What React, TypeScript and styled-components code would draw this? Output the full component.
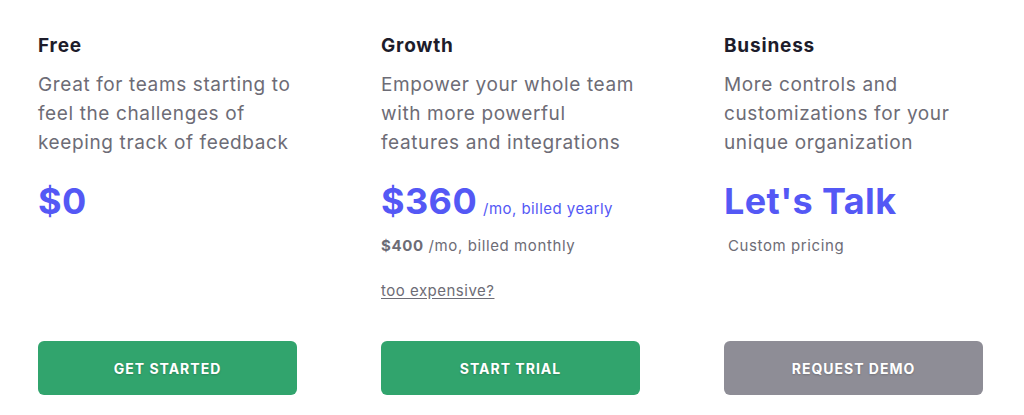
import React from "react";
import styled, { createGlobalStyle } from "styled-components";

const Global = createGlobalStyle`
  html, body { margin: 0; padding: 0; background: #fff; }
  body { font-family: Inter, "Noto Sans", sans-serif; -webkit-font-smoothing: antialiased; }
`;

const Page = styled.div`
  display: grid;
  grid-template-columns: repeat(3, 343px);
  padding: 33px 0 0 38px;
`;

const Plan = styled.div`
  display: flex;
  flex-direction: column;
  height: 362px;
`;

const Title = styled.h3`
  margin: 0;
  font-size: 19px;
  line-height: 26px;
  font-weight: 700;
  letter-spacing: 0.8px;
  color: #1d1c2b;
`;

const Desc = styled.p`
  margin: 11px 0 0;
  width: 258px;
  font-size: 19px;
  line-height: 29px;
  letter-spacing: 0.62px;
  color: #6d6c76;
`;

const PriceRow = styled.div`
  display: flex;
  align-items: baseline;
  margin-top: 20px;
  gap: 6px;
`;

const Price = styled.span`
  font-size: 36px;
  line-height: 48px;
  font-weight: 700;
  letter-spacing: 0.4px;
  color: #5458f5;
`;

const Period = styled.span`
  font-size: 15px;
  letter-spacing: 0.45px;
  color: #5458f5;
`;

const Sub = styled.div<{ $indent?: boolean }>`
  margin-top: 9px;
  font-size: 15px;
  line-height: 24px;
  letter-spacing: 0.6px;
  color: #6d6c76;
  padding-left: ${(p) => (p.$indent ? "4px" : "0")};
  b { color: #6d6c76; font-weight: 700; margin-right: 5px; }
`;

const Link = styled.a`
  margin-top: 21px;
  font-size: 15px;
  line-height: 24px;
  letter-spacing: 0.5px;
  color: #6d6c76;
  text-decoration: underline;
  text-underline-offset: 2px;
  align-self: flex-start;
`;

const Button = styled.button<{ $variant: "green" | "gray" }>`
  margin-top: auto;
  width: 259px;
  height: 54px;
  border: none;
  border-radius: 6px;
  background: ${(p) => (p.$variant === "green" ? "#31a46d" : "#8e8d96")};
  color: #fff;
  font-family: Inter, "Noto Sans", sans-serif;
  font-size: 14px;
  font-weight: 700;
  letter-spacing: 1px;
  text-transform: uppercase;
  text-shadow: 0 1px 2px rgba(0, 0, 0, 0.2);
  cursor: pointer;
`;

export default function App() {
  return (
    <>
      <Global />
      <Page>
        <Plan>
          <Title>Free</Title>
          <Desc>Great for teams starting to feel the challenges of keeping track of feedback</Desc>
          <PriceRow>
            <Price>$0</Price>
          </PriceRow>
          <Button $variant="green">Get Started</Button>
        </Plan>
        <Plan>
          <Title>Growth</Title>
          <Desc>Empower your whole team with more powerful features and integrations</Desc>
          <PriceRow>
            <Price>$360</Price>
            <Period>/mo, billed yearly</Period>
          </PriceRow>
          <Sub>
            <b>$400</b>/mo, billed monthly
          </Sub>
          <Link href="#">too expensive?</Link>
          <Button $variant="green">Start Trial</Button>
        </Plan>
        <Plan>
          <Title>Business</Title>
          <Desc>More controls and customizations for your unique organization</Desc>
          <PriceRow>
            <Price>Let's Talk</Price>
          </PriceRow>
          <Sub $indent>Custom pricing</Sub>
          <Button $variant="gray">Request Demo</Button>
        </Plan>
      </Page>
    </>
  );
}
